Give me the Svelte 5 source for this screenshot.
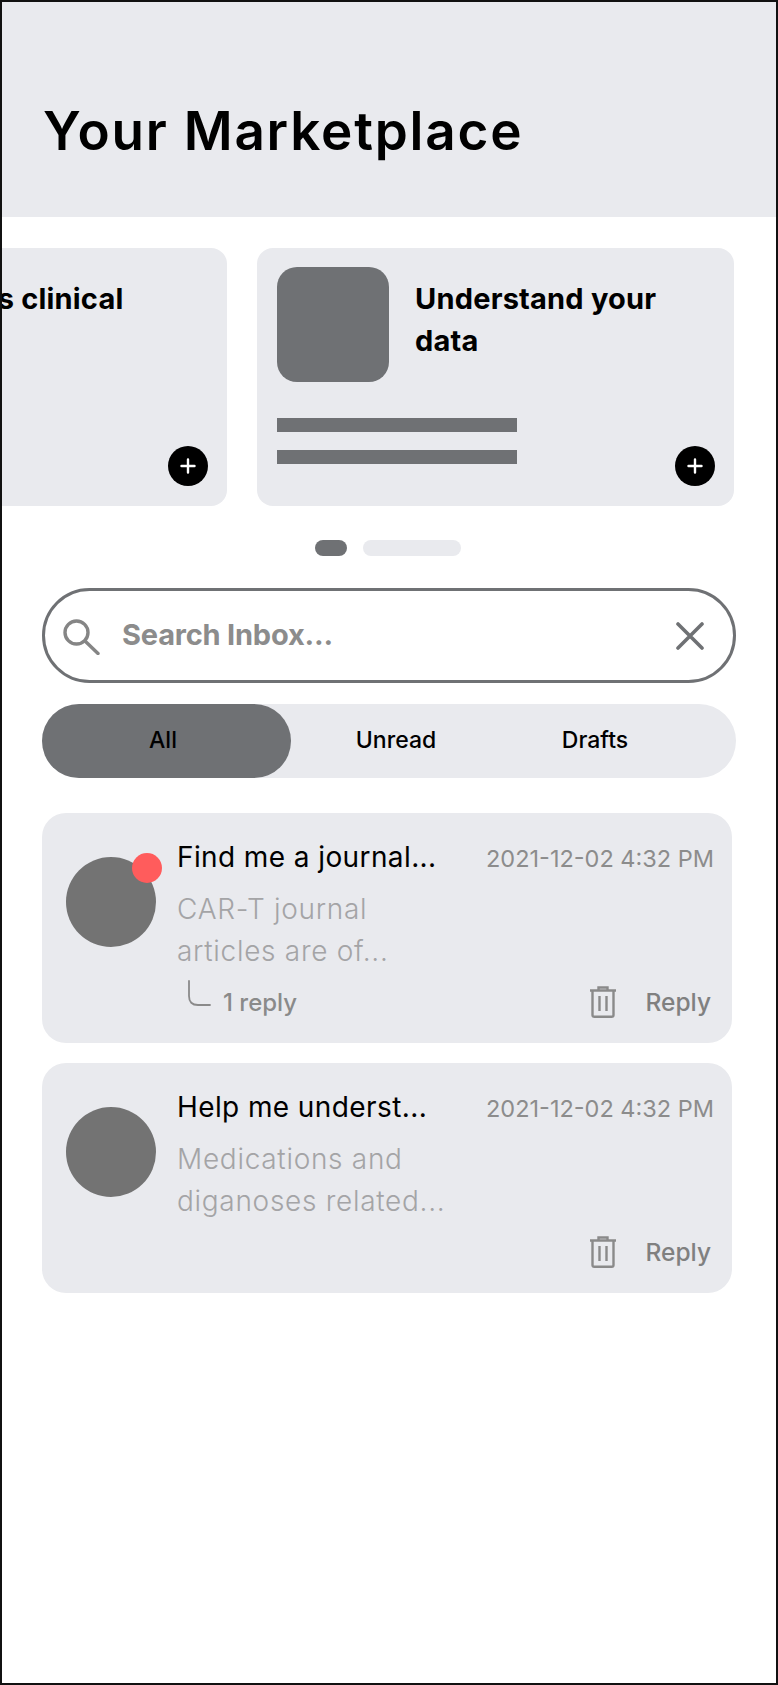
<script>
  const messages = [
    { title: 'Find me a journal...', lines: ['CAR-T journal', 'articles are of...'], unread: true, replies: '1 reply' },
    { title: 'Help me underst...', lines: ['Medications and', 'diganoses related...'], unread: false, replies: '' }
  ];
</script>

<div class="frame">
  <header class="header"><h1>Your Marketplace</h1></header>

  <section class="carousel">
    <article class="promo">
      <div class="promo-top">
        <div class="thumb"></div>
        <h2>Access clinical</h2>
      </div>
      <span class="plus"><svg viewBox="0 0 40 40" width="40" height="40"><path d="M20 13.5v13M13.5 20h13" stroke="#fff" stroke-width="2.4" stroke-linecap="round"/></svg></span>
    </article>
    <article class="promo">
      <div class="promo-top">
        <div class="thumb"></div>
        <h2>Understand your data</h2>
      </div>
      <div class="bars"><i></i><i></i></div>
      <span class="plus"><svg viewBox="0 0 40 40" width="40" height="40"><path d="M20 13.5v13M13.5 20h13" stroke="#fff" stroke-width="2.4" stroke-linecap="round"/></svg></span>
    </article>
  </section>

  <div class="dots"><i class="on"></i><i></i></div>

  <div class="search">
    <svg class="s-ico" viewBox="0 0 38 36" width="38" height="36" fill="none" stroke="#858585" stroke-width="3.4"><circle cx="13.5" cy="13.5" r="11.5"/><path d="M22 22l13 12.5" stroke-linecap="round"/></svg>
    <span class="s-text">Search Inbox...</span>
    <svg class="s-x" viewBox="0 0 28 28" width="28" height="28" fill="none" stroke="#6f7174" stroke-width="3.6" stroke-linecap="round"><path d="M2 2l24 24M26 2L2 26"/></svg>
  </div>

  <nav class="tabs">
    <span class="tab active">All</span>
    <span class="tab">Unread</span>
    <span class="tab">Drafts</span>
  </nav>

  <section class="list">
    {#each messages as m}
      <article class="msg">
        <div class="avatar">{#if m.unread}<span class="badge"></span>{/if}</div>
        <div class="main">
          <div class="row">
            <span class="title">{m.title}</span>
            <span class="date">2021-12-02 4:32 PM</span>
          </div>
          <p class="body">{m.lines[0]}<br />{m.lines[1]}</p>
          <div class="foot">
            <div class="replies">
              {#if m.replies}
                <svg viewBox="0 0 24 28" width="24" height="28" fill="none" stroke="#8a8a8a" stroke-width="1.8" stroke-linecap="round"><path d="M2 1v15c0 6 3 9 9 9h12"/></svg>
                <span>{m.replies}</span>
              {/if}
            </div>
            <div class="actions">
              <svg viewBox="0 0 28 32" width="28" height="32" fill="none" stroke="#8a8a8a" stroke-width="2.4"><path d="M1 4.5h26M9.5 4V1.5h9V4M3.5 5v24a1.8 1.8 0 0 0 1.8 1.8h17.4a1.8 1.8 0 0 0 1.8-1.8V5M10.5 10v15M17.5 10v15"/></svg>
              <span class="reply">Reply</span>
            </div>
          </div>
        </div>
      </article>
    {/each}
  </section>
</div>

<style>
  :global(body) { margin: 0; background: #fff; }
  .frame {
    width: 778px; height: 1685px; box-sizing: border-box;
    border: 2px solid #111; overflow: hidden; background: #fff;
    font-family: Inter, "Liberation Sans", sans-serif; color: #000;
  }
  .header {
    height: 215px; background: #e9eaee; box-sizing: border-box;
    padding: 99px 0 0 41px;
  }
  h1 { margin: 0; font-size: 53px; line-height: 60px; font-weight: 600; letter-spacing: 1.8px; }
  .carousel { display: flex; gap: 30px; margin: 31px 0 0 -252px; }
  .promo {
    flex: none; position: relative; width: 477px; height: 258px; box-sizing: border-box;
    background: #e9eaee; border-radius: 16px; padding: 19px 20px;
  }
  .promo-top { display: flex; gap: 26px; }
  .thumb { flex: none; width: 112px; height: 115px; background: #6f7174; border-radius: 20px; }
  h2 { margin: 11px 0 0; max-width: 280px; font-size: 29px; line-height: 42px; font-weight: 700; letter-spacing: 0.2px; }
  .bars { display: flex; flex-direction: column; gap: 18px; margin-top: 36px; }
  .bars i { display: block; width: 240px; height: 14px; background: #6f7174; }
  .plus {
    position: absolute; right: 19px; bottom: 20px; width: 40px; height: 40px;
    border-radius: 50%; background: #000; display: block;
  }
  .plus svg { display: block; }
  .dots { display: flex; justify-content: center; gap: 16px; margin: 34px 2px 0 0; }
  .dots i { display: block; width: 98px; height: 16px; border-radius: 8px; background: #e9eaee; }
  .dots i.on { width: 32px; background: #6f7174; }
  .search {
    display: flex; align-items: center; box-sizing: border-box;
    width: 694px; height: 95px; margin: 32px 0 0 40px;
    border: 3px solid #6f7174; border-radius: 48px; padding: 0 29px 0 18px;
  }
  .s-ico { flex: none; margin-top: 2px; }
  .s-text { flex: 1; margin: -2px 0 0 21px; font-size: 29px; font-weight: 700; color: #8c8c8c; letter-spacing: -0.2px; }
  .s-x { flex: none; }
  .tabs {
    display: grid; grid-template-columns: 249px 210px 188px;
    width: 694px; height: 74px; margin: 21px 0 0 40px;
    background: #e9eaee; border-radius: 37px;
  }
  .tab { display: flex; align-items: center; justify-content: center; font-size: 23px; font-weight: 500; padding-bottom: 2px; box-sizing: border-box; }
  .tab.active { background: #6f7174; border-radius: 37px; padding-right: 7px; }
  .list { display: flex; flex-direction: column; gap: 20px; margin: 35px 0 0 40px; }
  .msg {
    display: flex; gap: 21px; width: 690px; height: 230px; box-sizing: border-box;
    background: #e9eaee; border-radius: 24px; padding: 23px 18px 0 24px;
  }
  .avatar { flex: none; position: relative; width: 90px; height: 90px; margin-top: 21px; border-radius: 50%; background: #737373; }
  .badge { position: absolute; top: -4px; right: -6px; width: 30px; height: 30px; border-radius: 50%; background: #ff5c5c; }
  .main { flex: 1; min-width: 0; }
  .row { display: flex; justify-content: space-between; align-items: baseline; line-height: 42px; }
  .title { font-size: 28px; color: #000; letter-spacing: 0.4px; }
  .date { font-size: 23.5px; color: #8c8c8c; letter-spacing: 0; }
  .body { margin: 8px 0 0; font-size: 28px; line-height: 42px; color: #a4a4a6; font-weight: 300; letter-spacing: 0.7px; }
  .foot { display: flex; justify-content: space-between; align-items: flex-start; margin-top: 8px; }
  .replies { display: flex; align-items: flex-end; color: #8a8a8a; font-size: 24px; font-weight: 500; margin-left: 10px; }
  .replies svg { flex: none; margin-right: 12px; margin-bottom: 12px; }
  .replies span { line-height: 34px; margin-top: 6px; }
  .actions { display: flex; align-items: center; gap: 28px; margin-top: 6px; padding-right: 3px; color: #808080; }
  .reply { font-size: 24.5px; font-weight: 500; }
</style>
